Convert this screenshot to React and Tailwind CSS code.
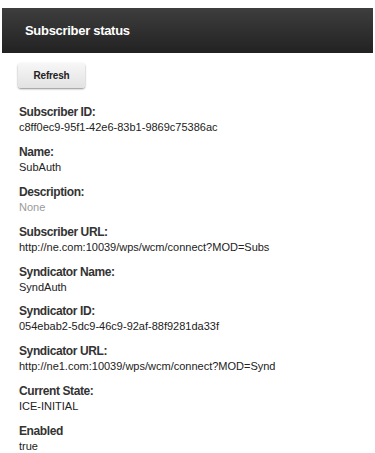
import React from 'react';

const fields = [
  { label: 'Subscriber ID:', value: 'c8ff0ec9-95f1-42e6-83b1-9869c75386ac' },
  { label: 'Name:', value: 'SubAuth' },
  { label: 'Description:', value: 'None', muted: true },
  { label: 'Subscriber URL:', value: 'http://ne.com:10039/wps/wcm/connect?MOD=Subs' },
  { label: 'Syndicator Name:', value: 'SyndAuth' },
  { label: 'Syndicator ID:', value: '054ebab2-5dc9-46c9-92af-88f9281da33f' },
  { label: 'Syndicator URL:', value: 'http://ne1.com:10039/wps/wcm/connect?MOD=Synd' },
  { label: 'Current State:', value: 'ICE-INITIAL' },
  { label: 'Enabled', value: 'true' },
];

export default function App() {
  return (
    <div className="w-full h-[453px] bg-white pt-[8px] font-['Liberation_Sans',Arial,sans-serif] overflow-hidden">
      <div className="mx-[2px] h-[45px] flex items-center pl-[23px] bg-gradient-to-b from-[#3e3e3e] to-[#222222]">
        <h1 className="text-[13px] font-bold tracking-[-0.3px] text-white">Subscriber status</h1>
      </div>
      <div className="pl-[18px]">
        <button className="mt-[10px] w-[67px] h-[25px] rounded-[3px] bg-gradient-to-b from-[#f7f7f7] to-[#e2e2e2] shadow-[0_1px_2px_rgba(0,0,0,0.45)] text-[10px] font-bold tracking-[-0.2px] text-[#222]">
          Refresh
        </button>
        <div className="mt-[17px] pl-[1px]">
          {fields.map((f) => (
            <div key={f.label} className="mb-[10.4px]">
              <div className="text-[12px] leading-[15px] font-bold tracking-[-0.4px] text-[#333]">{f.label}</div>
              <div className={`text-[11px] leading-[14.5px] ${f.muted ? 'text-[#9a9a9a]' : 'text-[#222]'}`}>
                {f.value}
              </div>
            </div>
          ))}
        </div>
      </div>
    </div>
  );
}
